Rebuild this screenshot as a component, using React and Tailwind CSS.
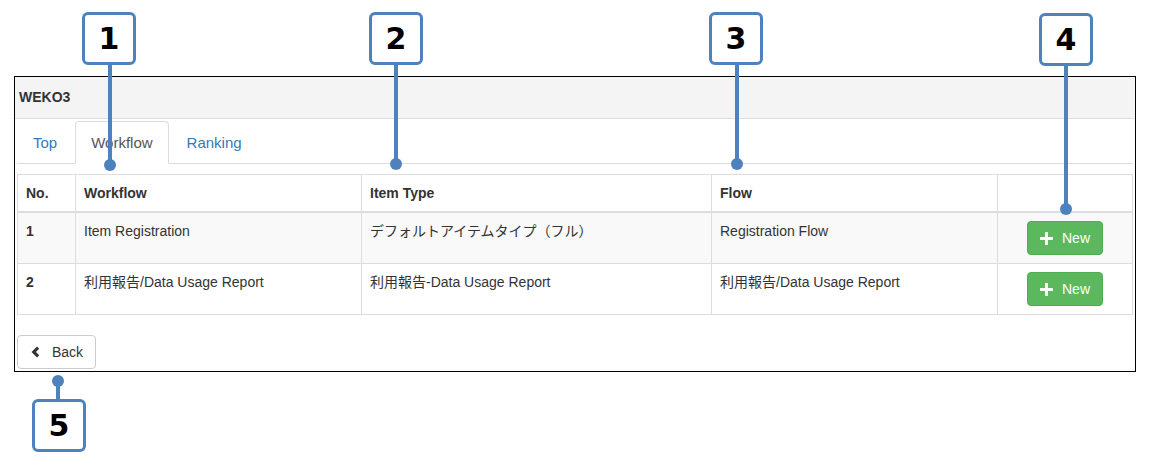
import React from 'react';

const FONT = { fontFamily: '"Liberation Sans", Arial, "Noto Sans CJK JP", sans-serif' };

const rows = [
  { no: 1, workflow: 'Item Registration', itemType: 'デフォルトアイテムタイプ（フル）', flow: 'Registration Flow', striped: true },
  { no: 2, workflow: '利用報告/Data Usage Report', itemType: '利用報告-Data Usage Report', flow: '利用報告/Data Usage Report', striped: false },
];

function PlusIcon() {
  return (
    <svg width="13" height="13" viewBox="0 0 13 13" className="shrink-0">
      <path d="M5 0h3v5h5v3H8v5H5V8H0V5h5z" fill="currentColor" />
    </svg>
  );
}

function ChevronLeft() {
  return (
    <svg width="10" height="12" viewBox="0 0 10 12" className="shrink-0">
      <path d="M7 0.5 L9.2 2.7 L5.9 6 L9.2 9.3 L7 11.5 L1.5 6 Z" fill="currentColor" />
    </svg>
  );
}

// callout: numbered box + connector line + dot
function Callout({ n, box, line, dot }) {
  return (
    <>
      <div className={`absolute bg-[#4f81bd] w-[4px] ${line}`} />
      <div className={`absolute w-[12px] h-[12px] rounded-full bg-[#4f81bd] ${dot}`} />
      <div
        className={`absolute w-[54px] h-[53px] bg-white border-[3px] border-[#4f81bd] rounded-[6px] flex items-center justify-center text-[30px] font-bold text-black ${box}`}
        style={{ fontFamily: '"DejaVu Sans", Verdana, sans-serif' }}
      >
        {n}
      </div>
    </>
  );
}

export default function App() {
  return (
    <div className="relative w-[1152px] h-[470px] bg-white overflow-hidden" style={FONT}>
      <div className="pt-[76px] pl-[14px]">
        <div className="w-[1122px] border border-black">
          {/* Header */}
          <div className="h-[42px] bg-[#f4f4f4] border-b border-[#ddd] pl-[4px] flex items-center text-[14px] font-bold text-[#333]">
            WEKO3
          </div>

          <div className="px-[2px] pb-[2px]">
            {/* Tabs */}
            <div className="pt-[2px] flex border-b border-[#ddd]">
              <a className="mr-[2px] -mb-px px-[15px] py-[10px] text-[15px] leading-[21px] text-[#337ab7] border border-transparent rounded-t-[4px]">Top</a>
              <a className="mr-[2px] -mb-px px-[15px] py-[10px] text-[15px] leading-[21px] text-[#555] bg-white border border-[#ddd] border-b-white rounded-t-[4px]">Workflow</a>
              <a className="mr-[2px] -mb-px px-[15px] py-[10px] text-[15px] leading-[21px] text-[#337ab7] border border-transparent rounded-t-[4px]">Ranking</a>
            </div>

            {/* Table */}
            <table className="mt-[10px] w-full border-collapse border border-[#ddd] text-[14px] leading-[20px] text-[#333]">
              <thead>
                <tr>
                  <th className="w-[58px] p-[8px] text-left font-bold border border-[#ddd] border-b-2">No.</th>
                  <th className="w-[286px] p-[8px] text-left font-bold border border-[#ddd] border-b-2">Workflow</th>
                  <th className="w-[350px] p-[8px] text-left font-bold border border-[#ddd] border-b-2">Item Type</th>
                  <th className="w-[286px] p-[8px] text-left font-bold border border-[#ddd] border-b-2">Flow</th>
                  <th className="p-[8px] border border-[#ddd] border-b-2"></th>
                </tr>
              </thead>
              <tbody>
                {rows.map((r) => (
                  <tr key={r.no} className={r.striped ? 'bg-[#f9f9f9]' : 'bg-white'}>
                    <td className="p-[8px] align-top font-bold border border-[#ddd]">{r.no}</td>
                    <td className="p-[8px] align-top border border-[#ddd]">{r.workflow}</td>
                    <td className="p-[8px] align-top border border-[#ddd]">{r.itemType}</td>
                    <td className="p-[8px] align-top border border-[#ddd]">{r.flow}</td>
                    <td className="p-[8px] align-top border border-[#ddd]">
                      <div className="flex justify-center">
                        <button className="w-[76px] h-[34px] flex items-center justify-center gap-[9px] bg-[#5cb85c] border border-[#4cae4c] rounded-[4px] text-white text-[14px]">
                          <PlusIcon />
                          <span>New</span>
                        </button>
                      </div>
                    </td>
                  </tr>
                ))}
              </tbody>
            </table>

            {/* Back */}
            <button className="mt-[20px] w-[79px] h-[34px] flex items-center justify-center gap-[12px] bg-white border border-[#ccc] rounded-[4px] text-[14px] text-[#333]">
              <ChevronLeft />
              <span>Back</span>
            </button>
          </div>
        </div>
      </div>

      <Callout n="1" box="left-[82px] top-[12px]" line="left-[108px] top-[60px] h-[104px]" dot="left-[104px] top-[159px]" />
      <Callout n="2" box="left-[369px] top-[12px]" line="left-[394px] top-[60px] h-[103px]" dot="left-[390px] top-[158px]" />
      <Callout n="3" box="left-[709px] top-[12px]" line="left-[735px] top-[60px] h-[103px]" dot="left-[731px] top-[158px]" />
      <Callout n="4" box="left-[1039px] top-[13px]" line="left-[1064px] top-[60px] h-[148px]" dot="left-[1060px] top-[203px]" />
      <Callout n="5" box="left-[32px] top-[399px]" line="left-[56px] top-[380px] h-[22px]" dot="left-[52px] top-[375px]" />
    </div>
  );
}
